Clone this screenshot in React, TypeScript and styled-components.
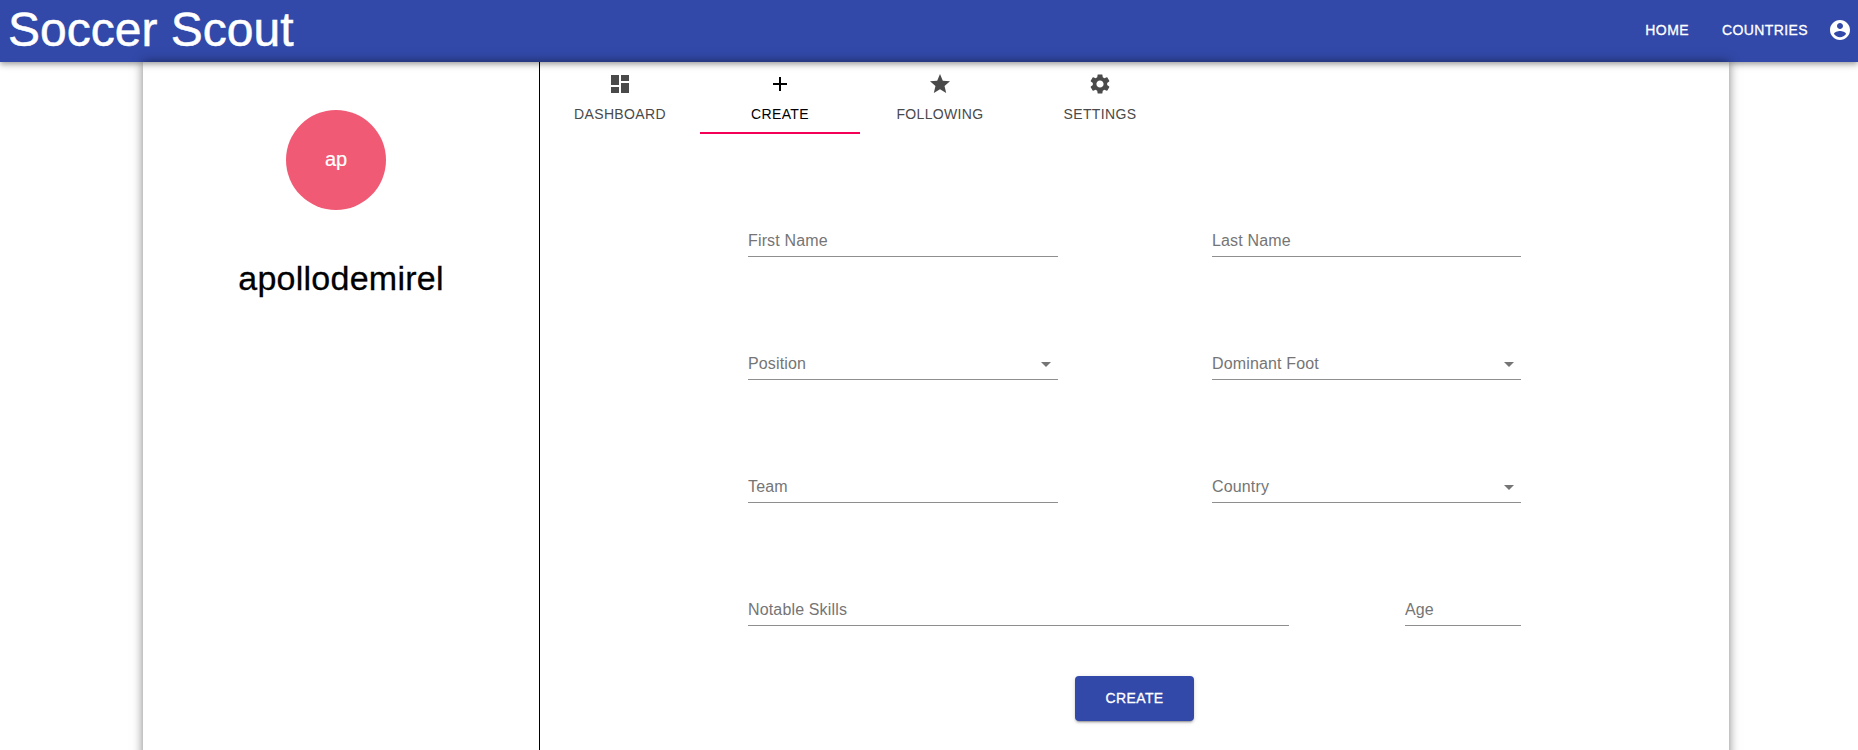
import React from 'react';
import styled, { createGlobalStyle } from 'styled-components';

const Global = createGlobalStyle`
  *, *::before, *::after { box-sizing: border-box; }
  body { margin: 0; background: #fff; font-family: Helvetica, "Liberation Sans", Arial, sans-serif; color: #000; overflow: hidden; }
`;

const Page = styled.div`
  height: 750px;
  display: flex;
  flex-direction: column;
  overflow: hidden;
`;

const AppBar = styled.header`
  position: relative;
  z-index: 1;
  flex: none;
  height: 62px;
  display: flex;
  align-items: center;
  padding: 0 6px 2px 8px;
  color: #fff;
  background: #3249a9;
  box-shadow: 0 2px 4px -1px rgba(0, 0, 0, 0.2), 0 4px 5px rgba(0, 0, 0, 0.14), 0 1px 10px rgba(0, 0, 0, 0.12);
`;

const Brand = styled.h1`
  margin: 0;
  flex: 1;
  font-size: 48px;
  font-weight: 400;
  line-height: 56px;
  white-space: nowrap;
  -webkit-text-stroke: 0.5px currentColor;
`;

const NavLink = styled.a<{ $gap: number }>`
  font-size: 14px;
  font-weight: 400;
  -webkit-text-stroke: 0.3px currentColor;
  letter-spacing: 0.4px;
  margin-right: ${p => p.$gap}px;
`;

const Icon = styled.svg<{ $size: number }>`
  display: block;
  flex: none;
  width: ${p => p.$size}px;
  height: ${p => p.$size}px;
  fill: currentColor;
`;

const Panel = styled.main`
  position: relative;
  z-index: 2;
  flex: none;
  height: 720px;
  width: 1586px;
  margin-left: 143px;
  display: flex;
  box-shadow: 0 0 10px rgba(0, 0, 0, 0.5);
`;

const Sidebar = styled.aside`
  width: 397px;
  border-right: 1px solid #000;
  display: flex;
  flex-direction: column;
  align-items: center;
`;

const Avatar = styled.div`
  width: 100px;
  height: 100px;
  margin: 48px 10px 0 0;
  padding-bottom: 2px;
  border-radius: 50%;
  display: flex;
  align-items: center;
  justify-content: center;
  font-size: 20px;
  -webkit-text-stroke: 0.2px currentColor;
  color: #fff;
  background: #f05a74;
`;

const UserName = styled.h2`
  margin: 48px 0 0;
  font-size: 34px;
  font-weight: 400;
  line-height: 40px;
  letter-spacing: 0.25px;
  -webkit-text-stroke: 0.3px currentColor;
`;

const Content = styled.section`
  flex: 1;
  display: flex;
  flex-direction: column;
`;

const Tabs = styled.nav`
  display: flex;
  height: 72px;
`;

const Tab = styled.button<{ $active?: boolean }>`
  width: 160px;
  height: 72px;
  padding: 10px 0 0;
  border: 0;
  border-bottom: 2px solid ${p => (p.$active ? '#f50057' : 'transparent')};
  background: none;
  display: flex;
  flex-direction: column;
  align-items: center;
  gap: 8px;
  font-family: inherit;
  font-size: 14px;
  line-height: 20px;
  letter-spacing: 0.35px;
  color: ${p => (p.$active ? '#000' : '#4a4a4a')};
`;

const Form = styled.form`
  width: 773px;
  margin: 91px 0 0 208px;
  display: flex;
  flex-direction: column;
`;

const Row = styled.div`
  display: flex;
  justify-content: space-between;
  margin-bottom: 91px;
`;

const Field = styled.label<{ $width: number }>`
  width: ${p => p.$width}px;
  height: 32px;
  display: flex;
  justify-content: space-between;
  align-items: center;
  border-bottom: 1px solid #8f8f8f;
  font-size: 16px;
  letter-spacing: 0.15px;
  color: #757575;
`;

const Submit = styled.button`
  align-self: center;
  margin-top: -41px;
  width: 119px;
  height: 45px;
  padding: 0 0 2px;
  border: 0;
  border-radius: 4px;
  font-family: inherit;
  font-size: 14px;
  letter-spacing: 0.4px;
  -webkit-text-stroke: 0.3px currentColor;
  color: #fff;
  background: #3249a9;
  box-shadow: 0 3px 1px -2px rgba(0, 0, 0, 0.2), 0 2px 2px rgba(0, 0, 0, 0.14), 0 1px 5px rgba(0, 0, 0, 0.12);
`;

const tabs = [
  { label: 'DASHBOARD', icon: 'M3 13h8V3H3v10zm0 8h8v-6H3v6zm10 0h8V11h-8v10zm0-18v6h8V3h-8z' },
  { label: 'CREATE', icon: 'M19 13h-6v6h-2v-6H5v-2h6V5h2v6h6v2z', active: true },
  { label: 'FOLLOWING', icon: 'M12 17.27L18.18 21l-1.64-7.03L22 9.24l-7.19-.61L12 2 9.19 8.63 2 9.24l5.46 4.73L5.82 21z' },
  { label: 'SETTINGS', icon: 'M19.14 12.94c.04-.3.06-.61.06-.94 0-.32-.02-.64-.07-.94l2.03-1.58c.18-.14.23-.41.12-.61l-1.92-3.32c-.12-.22-.37-.29-.59-.22l-2.39.96c-.5-.38-1.03-.7-1.62-.94l-.36-2.54c-.04-.24-.24-.41-.48-.41h-3.84c-.24 0-.43.17-.47.41l-.36 2.54c-.59.24-1.13.57-1.62.94l-2.39-.96c-.22-.08-.47 0-.59.22L2.74 8.87c-.12.21-.08.47.12.61l2.03 1.58c-.05.3-.09.63-.09.94s.02.64.07.94l-2.03 1.58c-.18.14-.23.41-.12.61l1.92 3.32c.12.22.37.29.59.22l2.39-.96c.5.38 1.03.7 1.62.94l.36 2.54c.05.24.24.41.48.41h3.84c.24 0 .44-.17.47-.41l.36-2.54c.59-.24 1.13-.56 1.62-.94l2.39.96c.22.08.47 0 .59-.22l1.92-3.32c.12-.22.07-.47-.12-.61l-2.01-1.58zM12 15.6c-1.98 0-3.6-1.62-3.6-3.6s1.62-3.6 3.6-3.6 3.6 1.62 3.6 3.6-1.62 3.6-3.6 3.6z' },
];

const rows = [
  [{ label: 'First Name', width: 310 }, { label: 'Last Name', width: 309 }],
  [{ label: 'Position', width: 310, select: true }, { label: 'Dominant Foot', width: 309, select: true }],
  [{ label: 'Team', width: 310 }, { label: 'Country', width: 309, select: true }],
  [{ label: 'Notable Skills', width: 541 }, { label: 'Age', width: 116 }],
];

const Glyph = ({ d, size = 24 }: { d: string; size?: number }) => (
  <Icon viewBox="0 0 24 24" $size={size}><path d={d} /></Icon>
);

export default function App() {
  return (
    <Page>
      <Global />
      <AppBar>
        <Brand>Soccer Scout</Brand>
        <NavLink $gap={33}>HOME</NavLink>
        <NavLink $gap={20}>COUNTRIES</NavLink>
        <Glyph d="M12 2C6.48 2 2 6.48 2 12s4.48 10 10 10 10-4.48 10-10S17.52 2 12 2zm0 3c1.66 0 3 1.34 3 3s-1.34 3-3 3-3-1.34-3-3 1.34-3 3-3zm0 14.2c-2.5 0-4.71-1.28-6-3.22.03-1.99 4-3.08 6-3.08 1.99 0 5.97 1.09 6 3.08-1.29 1.94-3.5 3.22-6 3.22z" />
      </AppBar>
      <Panel>
        <Sidebar>
          <Avatar>ap</Avatar>
          <UserName>apollodemirel</UserName>
        </Sidebar>
        <Content>
          <Tabs>
            {tabs.map(t => (
              <Tab key={t.label} $active={t.active}>
                <Glyph d={t.icon} />
                {t.label}
              </Tab>
            ))}
          </Tabs>
          <Form>
            {rows.map((row, i) => (
              <Row key={i}>
                {row.map(f => (
                  <Field key={f.label} $width={f.width}>
                    {f.label}
                    {'select' in f && <Glyph d="M7 10l5 5 5-5z" />}
                  </Field>
                ))}
              </Row>
            ))}
            <Submit type="button">CREATE</Submit>
          </Form>
        </Content>
      </Panel>
    </Page>
  );
}
